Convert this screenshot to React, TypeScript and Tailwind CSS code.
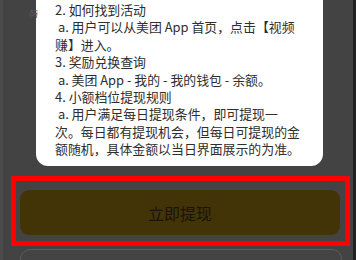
import React from "react";

const lines: string[] = [
  "2. 如何找到活动",
  " a. 用户可以从美团 App 首页，点击【视频",
  "赚】进入。",
  "3. 奖励兑换查询",
  " a. 美团 App - 我的 - 我的钱包 - 余额。",
  "4. 小额档位提现规则",
  " a. 用户满足每日提现条件，即可提现一",
  "次。每日都有提现机会，但每日可提现的金",
  "额随机，具体金额以当日界面展示的为准。",
];

export default function App() {
  return (
    <div
      className="w-[356px] h-[260px] bg-[#434343] overflow-hidden flex"
      style={{ fontFamily: '"Noto Sans CJK SC", "Noto Sans", sans-serif' }}
    >
      <div className="w-[3px] h-full shrink-0 bg-[#4b4b4b]" />
      <div className="flex-1 flex flex-col relative">
        <div className="absolute left-[25px] top-[8px] text-[11px] leading-none text-[#595959] rotate-[-30deg]">
          今
        </div>
        <div className="shrink-0 ml-[33px] w-[287px] h-[166px] bg-white rounded-b-[12px] pl-[19px] pt-[1px] text-[12.9px] leading-[17.4px] text-[#2e2e2e]">
          {lines.map((l, i) => (
            <div key={i} className="whitespace-pre">
              {l}
            </div>
          ))}
        </div>
        <div className="shrink-0 mt-[10px] ml-[8px] w-[339px] h-[70px] border-[5px] border-[#ff0000] pl-[4px] pt-[9px] pr-[5px] pb-[6px]">
          <div className="w-full h-full bg-[#423407] rounded-[9px] flex items-center justify-center text-[16px] text-[#18150a]">
            立即提现
          </div>
        </div>
        <div className="shrink-0 mt-[3px] ml-[17px] w-[322px] h-[30px] border border-[#5c5c5c] rounded-[10px] bg-[#444444]" />
      </div>
      <div className="w-[3px] h-full shrink-0 bg-[#222222]" />
    </div>
  );
}
